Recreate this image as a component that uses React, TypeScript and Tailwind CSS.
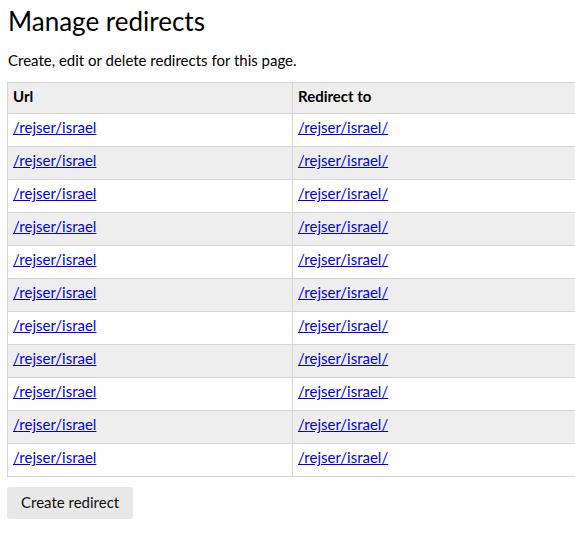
import React from "react";

const rows = Array.from({ length: 11 }, () => ({ url: "/rejser/israel", to: "/rejser/israel/" }));

export default function App() {
  return (
    <div className="px-[7px] pt-[5px] text-black" style={{ fontFamily: "Lato, 'Noto Sans', sans-serif" }}>
      <h1 className="ml-px text-[26px] leading-[32px] font-normal">Manage redirects</h1>
      <p className="ml-px mt-[13px] text-[15px] leading-[20px]">Create, edit or delete redirects for this page.</p>
      <table className="mt-[12px] w-[640px] border-collapse text-[15px] leading-[20px]">
        <thead>
          <tr className="h-[31px] bg-[#eeeeee]">
            <th className="w-[285px] border border-[#d6d6d6] px-[5px] pt-[3px] align-top text-left font-bold">Url</th>
            <th className="border border-[#d6d6d6] px-[5px] pt-[3px] align-top text-left font-bold">Redirect to</th>
          </tr>
        </thead>
        <tbody>
          {rows.map((r, i) => (
            <tr key={i} className={`h-[33px] ${i % 2 === 1 ? "bg-[#eeeeee]" : "bg-white"}`}>
              <td className="border border-[#d6d6d6] px-[5px] pt-[3px] align-top">
                <a href="#" className="text-[#0000ee] underline">{r.url}</a>
              </td>
              <td className="border border-[#d6d6d6] px-[5px] pt-[3px] align-top">
                <a href="#" className="text-[#0000ee] underline">{r.to}</a>
              </td>
            </tr>
          ))}
        </tbody>
      </table>
      <button className="mt-[10px] h-[32px] rounded-[3px] bg-[#e8e8e8] px-[14px] pb-[2px] text-[15px] text-[#111]">Create redirect</button>
    </div>
  );
}
